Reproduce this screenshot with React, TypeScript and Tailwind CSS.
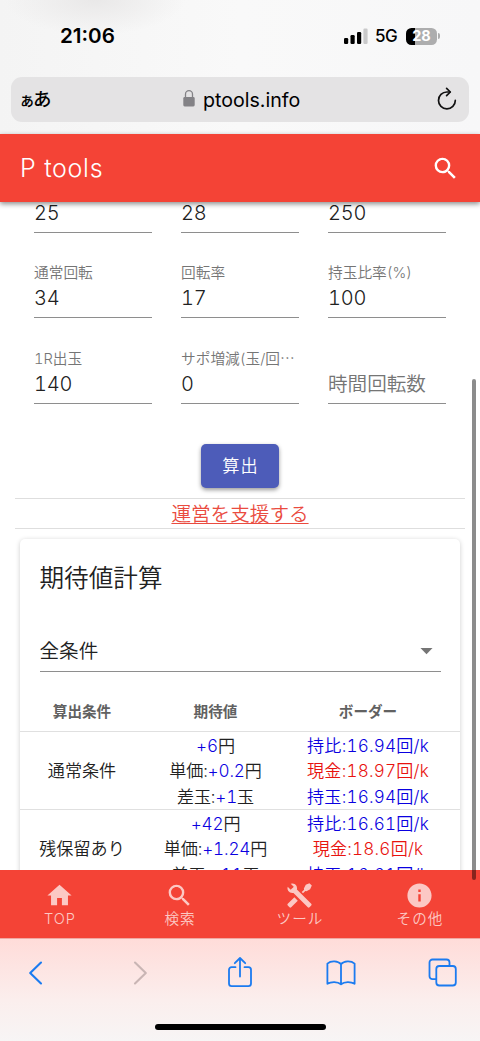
import type { ReactNode } from "react";
import { MdArrowDropDown, MdHome, MdInfo, MdSearch } from "react-icons/md";

const fields = [
  [
    { label: "", value: "25" },
    { label: "", value: "28" },
    { label: "", value: "250" },
  ],
  [
    { label: "通常回転", value: "34" },
    { label: "回転率", value: "17" },
    { label: "持玉比率(%)", value: "100" },
  ],
  [
    { label: "1R出玉", value: "140" },
    { label: "サポ増減(玉/回", value: "0", more: true },
    { label: "", value: "", placeholder: "時間回転数" },
  ],
];

const rows = [
  {
    name: "通常条件",
    yen: "+6",
    unit: "+0.2",
    balls: "+1",
    border: ["持比:16.94回/k", "現金:18.97回/k", "持玉:16.94回/k"],
  },
  {
    name: "残保留あり",
    yen: "+42",
    unit: "+1.24",
    balls: "+11",
    border: ["持比:16.61回/k", "現金:18.6回/k", "持玉:16.61回/k"],
  },
];

function ToolsIcon() {
  return (
    <svg viewBox="0 0 24 24" className="size-[29px]" fill="currentColor">
      <path d="M21.71 20.29L20.29 21.71A1 1 0 0 1 18.88 21.71L7 9.85A3.81 3.81 0 0 1 6 10A4 4 0 0 1 2.22 4.7L4.76 7.24L5.29 6.71L6.71 5.29L7.24 4.76L4.7 2.22A4 4 0 0 1 10 6A3.81 3.81 0 0 1 9.85 7L21.71 18.88A1 1 0 0 1 21.71 20.29M2.29 18.88A1 1 0 0 0 2.29 20.29L3.71 21.71A1 1 0 0 0 5.12 21.71L10.59 16.25L7.76 13.42M22.2 3.8L20.2 1.8L17.2 3.2L15.6 6.2L15.8 7.2L13.83 9.1L14.9 10.17L16.8 8.2L17.8 8.4L20.8 6.8Z" />
    </svg>
  );
}

function StatusBar() {
  return (
    <div className="flex h-[77px] items-start justify-between pl-[60px] pr-[40px] pt-[24px] font-['Inter']">
      <div className="text-[20.6px] font-semibold leading-6">21:06</div>
      <div className="flex h-6 items-center">
        <svg viewBox="0 0 24 16" className="h-4 w-6">
          <rect x="0" y="10" width="4.2" height="6" rx="1.2" />
          <rect x="6.5" y="7" width="4.2" height="9" rx="1.2" />
          <rect x="13" y="4" width="4.2" height="12" rx="1.2" />
          <rect x="19.4" y="0.5" width="4.2" height="15.5" rx="1.2" fill="#c9c9ca" />
        </svg>
        <span className="ml-[7px] mt-px w-[24px] text-[17px] font-medium tracking-tight">5G</span>
        <div className="ml-[7px] flex h-[17px] w-[31px] items-center justify-center rounded-[5.5px] bg-[linear-gradient(90deg,#000_9px,#adadae_9px)] text-[14.5px] font-bold leading-none text-white">
          28
        </div>
        <div className="ml-px h-[6px] w-[2px] rounded-r-full bg-[#adadae]" />
      </div>
    </div>
  );
}

function AddressBar() {
  return (
    <div className="mx-[11px] flex h-[45px] items-center rounded-[11px] bg-[#e4e3e4] pl-[8px] pr-[12px]">
      <div className="flex w-[164px] items-baseline leading-6">
        <span className="text-[16px] font-medium">ぁ</span>
        <span className="-ml-[2px] text-[18.5px] font-medium">あ</span>
      </div>
      <svg viewBox="0 0 12 17" className="-mt-[2px] h-[17px] w-[12px]">
        <rect x="0.3" y="7" width="11.4" height="9.5" rx="1.4" fill="#838286" />
        <path d="M2.5 7.5V4.2a3.5 3.5 0 0 1 7 0v3.3" fill="none" stroke="#838286" strokeWidth="1.3" />
      </svg>
      <span className="ml-[8px] font-['Inter'] text-[19.6px] leading-6">ptools.info</span>
      <svg viewBox="0 0 20 23" className="-mt-[2px] ml-auto h-[23px] w-[20px]" fill="none" stroke="#111" strokeWidth="1.7" strokeLinecap="round" strokeLinejoin="round">
        <path d="M18.3 13.4a8.4 8.4 0 1 1-8.4-8.4h3" />
        <path d="M9.6 1.4l3.7 3.6-3.7 3.7" />
      </svg>
    </div>
  );
}

function Line({ children }: { children: ReactNode }) {
  return <div className="h-[25.8px] whitespace-nowrap leading-[25.8px]">{children}</div>;
}

function Blue({ children }: { children: ReactNode }) {
  return <span className="text-[#0a00e0]">{children}</span>;
}

function NavItem({ icon, label }: { icon: ReactNode; label: string }) {
  return (
    <div className="flex flex-1 flex-col items-center pt-[10px]">
      <div className="-ml-px flex h-[30px] items-center">{icon}</div>
      <div className="text-[14.6px] font-[350] leading-[18px] tracking-[1px]">{label}</div>
    </div>
  );
}

export default function App() {
  return (
    <div className="relative flex h-[1041px] w-[480px] flex-col overflow-hidden bg-white font-['Inter','Noto_Sans_CJK_JP',sans-serif] text-black">
      {/* Browser top */}
      <div className="h-[134px] shrink-0 bg-[radial-gradient(ellipse_90px_35px_at_95px_0px,#e9e8e8,transparent),linear-gradient(90deg,#f4f4f4,#f9f9f9_50%,#f7f7f8)]">
        <StatusBar />
        <AddressBar />
      </div>

      {/* App bar */}
      <header className="z-10 flex h-[68px] shrink-0 items-center justify-between bg-[#f44336] pl-[20px] pr-[20px] text-white shadow-[0_2px_5px_rgba(0,0,0,0.45)]">
        <h1 className="text-[25px] font-light leading-8 tracking-[0.7px]">P tools</h1>
        <MdSearch className="size-[29px]" />
      </header>

      <main className="h-[668px] shrink-0 overflow-hidden">
        {/* Inputs */}
        <div className="-mt-[55px] pl-[34px] tabular-nums">
          {fields.map((row, i) => (
            <div key={i} className="flex gap-[29px]">
              {row.map((field, j) => (
                <div key={j} className="flex h-[85.5px] w-[118px] flex-col justify-end border-b border-[#8e8e8e] pb-[5px]">
                  <div className="h-[22px] whitespace-nowrap text-[14.7px] font-[350] leading-[22px] text-[#757575]">
                    {field.label}
                    {field.more && <span className="font-['Noto_Sans_CJK_JP'] leading-none">…</span>}
                  </div>
                  <div className="h-[28px] text-[20px] font-[350] leading-[28px] tracking-[-0.2px] text-[#212121]">
                    {field.value || <span className="text-[19.6px] tracking-normal text-[#757575]">{field.placeholder}</span>}
                  </div>
                </div>
              ))}
            </div>
          ))}
        </div>

        <div className="mt-[40.5px] flex justify-center">
          <button className="h-[44px] w-[78px] rounded-[5px] bg-[#4d5cb9] pl-px text-[17.2px] font-[350] leading-[42px] tracking-[1px] text-white shadow-[0_2px_4px_rgba(0,0,0,0.4)]">
            算出
          </button>
        </div>

        <div className="mx-[15px] mt-[10px] h-[31px] border-y border-[#dedede] text-center text-[19.6px] font-[350] leading-[31px] text-[#ea4b40]">
          <a className="underline decoration-1 underline-offset-[2px]">運営を支援する</a>
        </div>

        {/* Results */}
        <section className="mx-[20px] mt-[10px] h-[400px] rounded-[5px] bg-white shadow-[0_1px_5px_rgba(0,0,0,0.2)]">
          <h2 className="h-[78px] pl-[19.5px] text-[24.6px] font-[350] leading-[78px] text-[#212121]">期待値計算</h2>
          <div className="mx-[19.5px] mt-[13.5px] flex h-[41px] items-center justify-between border-b border-[#8e8e8e] text-[19.6px] font-[350] text-[#212121]">
            <span className="pt-px leading-[40px]">全条件</span>
            <MdArrowDropDown className="size-[29px] text-[#757575]" />
          </div>

          <div className="mt-[20px] flex h-[40px] border-b border-[#e0e0e0] text-center text-[14.6px] font-bold leading-[40px] text-[#616161]">
            <div className="w-[124px]">算出条件</div>
            <div className="w-[143px]">期待値</div>
            <div className="w-[162px]">ボーダー</div>
          </div>
          {rows.map((row) => (
            <div key={row.name} className="flex h-[78px] items-center border-b border-[#e0e0e0] pt-[2.5px] text-center text-[17.1px] font-[350] tabular-nums text-[#212121]">
              <div className="w-[124px]">{row.name}</div>
              <div className="w-[143px] tracking-[-0.15px]">
                <Line><Blue>{row.yen}</Blue>円</Line>
                <Line>単価:<Blue>{row.unit}</Blue>円</Line>
                <Line>差玉:<Blue>{row.balls}</Blue>玉</Line>
              </div>
              <div className="w-[162px] tracking-[0.2px] text-[#0a00e0]">
                <Line>{row.border[0]}</Line>
                <Line><span className="text-[#e8130f]">{row.border[1]}</span></Line>
                <Line>{row.border[2]}</Line>
              </div>
            </div>
          ))}
        </section>
      </main>

      {/* Bottom navigation */}
      <nav className="flex h-[68px] shrink-0 bg-[#f44336] text-[#fcc8c4]">
        <NavItem icon={<MdHome className="size-[29px]" />} label="TOP" />
        <NavItem icon={<MdSearch className="size-[29px]" />} label="検索" />
        <NavItem icon={<ToolsIcon />} label="ツール" />
        <NavItem icon={<MdInfo className="size-[29px]" />} label="その他" />
      </nav>

      {/* Browser toolbar */}
      <div className="flex flex-1 flex-col items-center border-t border-[#f0a8a2] bg-[linear-gradient(180deg,#ffdcd9,#fbeeed_60%,#f7f5f5)]">
        <div className="flex h-[67px] w-full items-center pl-[28px] text-[#1b7bf0]">
          <svg viewBox="0 0 15 24" className="h-6 w-[15px]" fill="none" stroke="currentColor" strokeWidth="2.1" strokeLinecap="round" strokeLinejoin="round">
            <path d="M13 1.5L2.2 12 13 22.5" />
          </svg>
          <svg viewBox="0 0 15 24" className="ml-[89.5px] h-6 w-[15px] text-[#c9b5b4]" fill="none" stroke="currentColor" strokeWidth="2.1" strokeLinecap="round" strokeLinejoin="round">
            <path d="M2 1.5L12.8 12 2 22.5" />
          </svg>
          <svg viewBox="0 0 26 32" className="-mt-[2px] ml-[79px] h-8 w-[26px]" fill="none" stroke="currentColor" strokeWidth="1.8" strokeLinecap="round" strokeLinejoin="round">
            <path d="M8.5 11.2H4.6A2.6 2.6 0 0 0 2 13.8V27.5a2.6 2.6 0 0 0 2.6 2.6H21.4a2.6 2.6 0 0 0 2.6-2.6V13.8a2.6 2.6 0 0 0-2.6-2.6H17.5" />
            <path d="M13 20.5V2.5M7.8 7.2L13 2l5.2 5.2" />
          </svg>
          <svg viewBox="0 0 30 26" className="ml-[73.5px] h-[26px] w-[30px]" fill="none" stroke="currentColor" strokeWidth="1.8" strokeLinejoin="round">
            <path d="M15 4.2C12 .7 5 .4 1.4 3.6V23.8C5 21.5 11.5 21.3 15 24.3C18.5 21.3 25 21.5 28.6 23.8V3.6C25 .4 18 .7 15 4.2V24.3" />
          </svg>
          <svg viewBox="0 0 29 29" className="ml-[71.5px] size-[29px]" fill="none" stroke="currentColor" strokeWidth="1.8" strokeLinejoin="round">
            <rect x="8.3" y="8" width="19.5" height="19.5" rx="3" />
            <path d="M8 21.2H4.5a3 3 0 0 1-3-3V4.5a3 3 0 0 1 3-3H18.5a3 3 0 0 1 3 3V8" />
          </svg>
        </div>
        <div className="mt-[18px] h-[6px] w-[171px] rounded-full bg-black" />
      </div>

      {/* Scroll indicator */}
      <div className="absolute left-[472px] top-[379px] z-20 h-[501px] w-[4px] rounded-full bg-black/45" />
    </div>
  );
}
